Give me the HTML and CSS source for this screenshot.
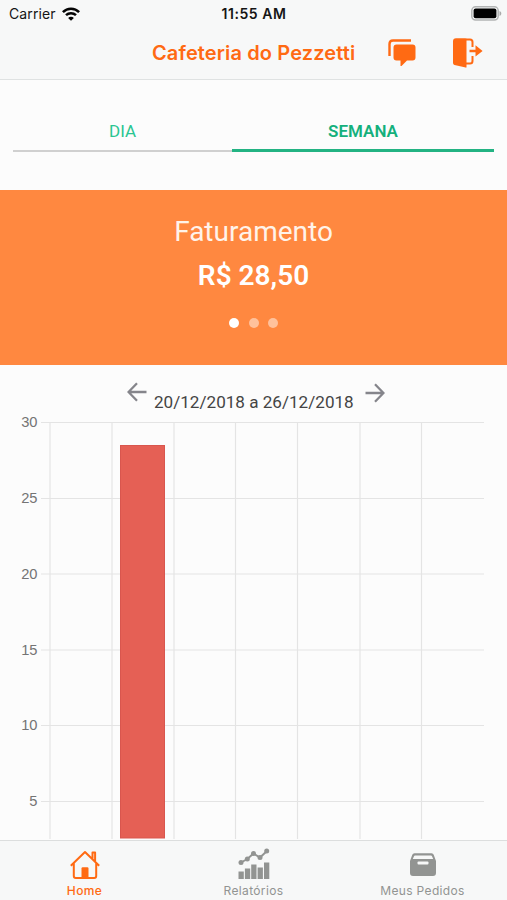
FILE: index.html
```html
<!DOCTYPE html>
<html lang="pt-BR">
<head>
<meta charset="utf-8">
<title>Cafeteria do Pezzetti</title>
<link rel="stylesheet" href="styles.css">
</head>
<body>
<div class="app">
  <header class="header">
    <div class="status">
      <div class="carrier"><span>Carrier</span>
        <svg width="18" height="14" viewBox="0 0 18 14" fill="none" stroke="#050505" stroke-width="2.5"><path d="M.9 5.1C5.3.5 12.7.5 17.1 5.1M4 8.2c2.8-2.7 7.2-2.7 10 0"/><path d="M9 13.8 6.1 10.9c1.6-1.6 4.2-1.6 5.8 0z" fill="#050505" stroke="none"/></svg>
      </div>
      <time class="clock">11:55 AM</time>
      <svg class="battery" width="31" height="15" viewBox="0 0 31 15"><rect x=".8" y=".8" width="26.4" height="13.2" rx="3.8" fill="#f7f8f8" stroke="#b2b4b4" stroke-width="1.5"/><rect x="2.6" y="2.6" width="22.8" height="9.6" rx="2" fill="#000"/><path d="M28.5 5v5c2.4-.7 2.4-4.3 0-5z" fill="#aaa"/></svg>
    </div>
    <div class="navbar">
      <h1 class="title">Cafeteria do Pezzetti</h1>
      <div class="actions">
        <svg width="28" height="28" viewBox="0 0 28 28"><path d="M1.500 17V5Q1.500 1.500 5 1.500H23" fill="none" stroke="#ff6a13" stroke-width="2.400"/><path d="M8.500 5.500h16q3 0 3 3v10q0 3-3 3h-5.500L13.500 27h-1v-5.500H8.500q-3 0-3-3v-10q0-3 3-3z" fill="#ff6a13"/></svg>
        <svg width="30" height="30" viewBox="0 0 30 30"><path d="M3 .3h9.500q1 0 1 1V29q0 .8-.8.6L1.500 27Q0 26.600 0 25V3.300Q0 .3 3 .3z" fill="#ff6a13"/><path d="M13 1.500h4q2.500 0 2.500 2.500v5M13 25.500h4q2.500 0 2.500-2.500v-5" fill="none" stroke="#ff6a13" stroke-width="2"/><path d="M16.500 11.700h6V7.300L29.600 13l-7.100 5.600v-4.300h-6z" fill="#ff6a13"/></svg>
      </div>
    </div>
  </header>

  <main class="content">
    <nav class="tabs">
      <a class="tab">DIA</a>
      <a class="tab tab-active">SEMANA</a>
    </nav>

    <section class="banner">
      <h2 class="banner-label">Faturamento</h2>
      <strong class="banner-value">R$ 28,50</strong>
      <div class="dots"><i class="dot dot-on"></i><i class="dot"></i><i class="dot"></i></div>
    </section>

    <div class="period">
      <svg class="arrow" width="20" height="20" viewBox="0 0 20 20"><path d="M19.500 10H1.500M10 1.200 1.500 10l8.500 8.800"/></svg>
      <span class="range">20/12/2018 a 26/12/2018</span>
      <svg class="arrow arrow-next" width="20" height="20" viewBox="0 0 20 20"><path d="M.5 10h18M10 1.200l8.500 8.800-8.500 8.800"/></svg>
    </div>

    <svg class="chart" width="507" height="430" viewBox="0 410 507 430">
      <path class="grid" d="M41 422.500H484M41 498.500H484M41 574H484M41 650H484M41 725.500H484M41 801.500H484M50 422V839M112 422V839M174 422V839M235.500 422V839M297.500 422V839M360 422V839M421.500 422V839"/>
      <rect class="bar" x="120.500" y="445.500" width="44" height="392.500"/>
      <g class="axis">
        <text x="37.500" y="427">30</text>
        <text x="37.500" y="503">25</text>
        <text x="37.500" y="578.500">20</text>
        <text x="37.500" y="654.500">15</text>
        <text x="37.500" y="730">10</text>
        <text x="37.500" y="806">5</text>
      </g>
    </svg>
  </main>

  <footer class="tabbar">
    <a class="item item-active">
      <svg width="32" height="32" viewBox="0 -3 32 32"><path d="M1.800 15.800 16 2l14.200 13.800M4.800 13.500V26q0 2 2 2h18.400q2 0 2-2V13.500M23.500 8.500V2.500h2.600v8.500" fill="none" stroke="#ff6a13" stroke-width="2" stroke-linejoin="round"/><path d="M12.500 28V18.500q0-1.200 1.200-1.200h4.600q1.200 0 1.200 1.200V28z" fill="#ff6a13"/></svg>
      <span>Home</span>
    </a>
    <a class="item">
      <svg width="32" height="32" viewBox="0 0 32 32" fill="#929492"><path d="M3 15.500 9.300 12 15.500 6.500l6.500 4L29 4" fill="none" stroke="#929492" stroke-width="2"/><circle cx="3" cy="15.500" r="2.500"/><circle cx="9.300" cy="12" r="2.500"/><circle cx="15.500" cy="6.500" r="2.500"/><circle cx="22" cy="10.500" r="2.500"/><circle cx="28.700" cy="4" r="2.500"/><path d="M.5 24.500h5.300V32H.5zM6.900 21.500h5.300V32H6.900zM13.200 17.500h5.300V32h-5.300zM19.600 20.500h5.300V32h-5.300zM26 15.500h5.300V32H26z"/></svg>
      <span>Relatórios</span>
    </a>
    <a class="item">
      <svg width="26" height="32" viewBox="0 -1 26 32"><path d="M4.500 5.200h17q1.800 0 2.300 1.800L26 13v12q0 3-3 3H3q-3 0-3-3V13L2.200 7q.5-1.800 2.300-1.800z" fill="#929492"/><path d="M5 7.500h16q.8 0 1 .8L23.200 11H2.800L4 8.300q.2-.8 1-.8z" fill="#f7f8f8"/><rect x="7.500" y="13.500" width="11" height="3" rx="1" fill="#f7f8f8"/></svg>
      <span>Meus Pedidos</span>
    </a>
  </footer>
</div>
</body>
</html>
```
FILE: styles.css
```css
* { box-sizing: border-box; }
body { margin: 0; background: #fcfcfc; font-family: Roboto, "Liberation Sans", sans-serif; }
.app { width: 507px; height: 900px; display: flex; flex-direction: column; overflow: hidden; }

.header { height: 80px; flex: none; background: #f7f8f8; border-bottom: 1px solid #dfe2e2; font-family: Inter, sans-serif; }
.status { height: 27px; display: grid; grid-template-columns: 1fr auto 1fr; align-items: center; padding: 0 5px 0 6px; font-size: 14px; color: #151515; }
.carrier { display: flex; align-items: center; gap: 6px; padding-left: 3px; letter-spacing: .1px; }
.clock { font-weight: 600; letter-spacing: .55px; }
.battery { justify-self: end; }
.navbar { height: 52px; display: grid; grid-template-columns: 152px 204px 1fr; align-items: center; }
.title { grid-column: 2; margin: 0; font-size: 20px; line-height: 24px; font-weight: 600; letter-spacing: .13px; color: #ff6a13; white-space: nowrap; }
.actions { display: flex; align-items: center; justify-content: space-between; padding: 0 24px 0 32px; }

.content { flex: 1; min-height: 0; }
.tabs { height: 110px; display: grid; grid-template-columns: 219px 262px; padding: 38px 13px; }
.tab { height: 34px; display: flex; justify-content: center; line-height: 26px; font-size: 17px; color: #2bc592; border-bottom: 2px solid #d0d0d0; }
.tab-active { font-weight: 600; color: #14b07c; border-bottom: 3px solid #23b383; }

.banner { height: 175px; background: #ff8840; color: #fff; display: flex; flex-direction: column; align-items: center; padding-top: 25px; }
.banner-label { margin: 0; font-size: 28px; line-height: 34px; font-weight: 400; color: #fff3ea; }
.banner-value { margin-top: 10px; font-size: 28px; line-height: 34px; font-weight: 600; }
.dots { display: flex; gap: 9.5px; margin-top: 25px; }
.dot { width: 10px; height: 10px; border-radius: 50%; background: #ffc19b; }
.dot-on { background: #fff; }

.period { height: 45px; display: flex; align-items: flex-start; padding: 17px 0 0 127px; }
.arrow { fill: none; stroke: #85858b; stroke-width: 2.3; }
.arrow-next { margin: 1px 0 0 11px; }
.range { width: 200px; margin: 8px 0 0 7px; font-size: 17.1px; line-height: 24px; color: #444; white-space: nowrap; }

.chart { display: block; }
.grid { stroke: #e4e4e4; stroke-width: 1.2; fill: none; }
.bar { fill: #e56055; stroke: #d9564e; stroke-width: 1; }
.axis { font: 14.700px "Liberation Sans", sans-serif; fill: #747474; text-anchor: end; }

.tabbar { height: 60px; flex: none; display: grid; grid-template-columns: repeat(3, 1fr); background: #f7f8f8; border-top: 1px solid #dcdede; font-family: Inter, sans-serif; }
.item { display: flex; flex-direction: column; align-items: center; padding-top: 6px; font-size: 12px; line-height: 14px; letter-spacing: .35px; color: #929492; white-space: nowrap; }
.item svg { height: 32px; }
.item span { margin-top: 5px; }
.item-active { color: #ff6a13; font-weight: 500; }
```
